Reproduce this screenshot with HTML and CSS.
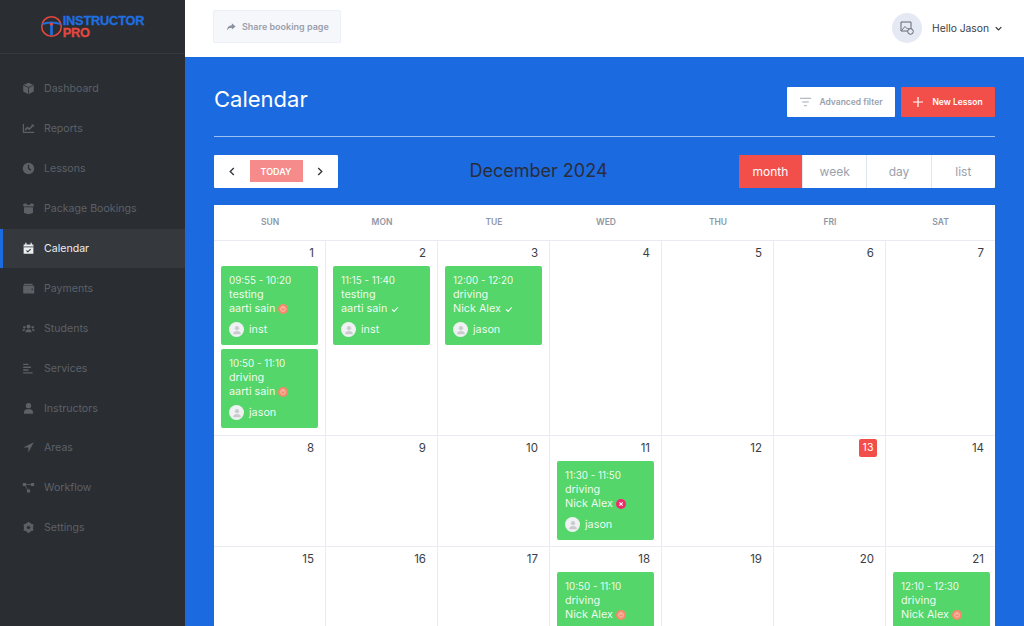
FILE: index.html
```html
<!DOCTYPE html>
<html lang="en">
<head>
<meta charset="utf-8">
<title>Calendar</title>
<link rel="stylesheet" href="styles.css">
</head>
<body>
<svg class="defs" width="0" height="0">
  <symbol id="person" viewBox="0 0 16 16"><circle cx="8" cy="5.6" r="2.8"/><path d="M2.8 13.6c0-3 2.2-4.4 5.2-4.4s5.2 1.400 5.200 4.400z"/></symbol>
  <symbol id="pending" viewBox="0 0 12 12"><circle cx="6" cy="6" r="6" fill="#f58a6c"/><circle cx="6" cy="6" r="2.8" fill="none" stroke="#fbd0c0" stroke-width="1"/><path d="M6 3.2v3" stroke="#fbd0c0" stroke-width="1"/></symbol>
  <symbol id="cancel" viewBox="0 0 12 12"><circle cx="6" cy="6" r="6" fill="#ee2b6c"/><path d="M4 4l4 4M8 4l-4 4" stroke="#fff" stroke-width="1.3"/></symbol>
  <symbol id="check" viewBox="0 0 12 12"><path d="M2.5 6.5l2.4 2.4 4.6-5" fill="none" stroke="#fff" stroke-width="1.3"/></symbol>
</svg>
<div class="app">
  <aside class="sidebar">
    <div class="brand">
      <svg class="brand-mark" viewBox="0 0 24 24" width="23" height="23"><circle cx="12" cy="12" r="10.2" fill="none" stroke="#e5483f" stroke-width="1.6"/><path d="M2.5 9.6c3-1.3 6-1.7 9.5-1.7s6.500.4 9.500 1.700" fill="none" stroke="#1f6fe0" stroke-width="2"/><path d="M10.600 9h2.800v12h-2.800z" fill="#1f6fe0"/><circle cx="12" cy="9.500" r="1.800" fill="#e5483f"/></svg>
      <div class="brand-text"><span class="brand-a">INSTRUCTOR</span><span class="brand-b">PRO</span></div>
    </div>
    <nav class="nav">
      <a class="nav-item"><svg class="nav-icon" viewBox="0 0 16 16"><path d="M8 1l6.500 2.600v8L8 15l-6.500-3.400v-8z"/><path d="M2 4l6 2.800L14 4M8 6.800V15" fill="none" stroke="#2a2d32" stroke-width="1"/></svg>Dashboard</a>
      <a class="nav-item"><svg class="nav-icon" viewBox="0 0 16 16"><path d="M1 2.500h1.500v9.500H15v1.500H1z"/><path d="M3.500 8.500l3-3 2.500 2 3.200-3.500-1.200-1h3.500v3.500l-1.100-1.100L9 10.200 6.700 8.300 3.500 11z"/></svg>Reports</a>
      <a class="nav-item"><svg class="nav-icon" viewBox="0 0 16 16"><circle cx="8" cy="8" r="7"/><path d="M8 3.500V8l3 2" fill="none" stroke="#2a2d32" stroke-width="1.500"/></svg>Lessons</a>
      <a class="nav-item"><svg class="nav-icon" viewBox="0 0 16 16"><path d="M1 3l3-1.500L8 4l4-2.500L15 3l-1 2.500H2zM2.500 6.500h11v7l-5.500 1.500-5.500-1.500z"/></svg>Package Bookings</a>
      <a class="nav-item is-active"><svg class="nav-icon" viewBox="0 0 16 16"><path d="M4 1h1.500v2H4zM10.500 1H12v2h-1.500zM2 3h12v11.500H2z"/><path d="M2 6h12" stroke="#35383d" stroke-width="1"/><path d="M5.500 10.500l1.800 1.600 3.300-3.300" fill="none" stroke="#35383d" stroke-width="1.400"/></svg>Calendar</a>
      <a class="nav-item"><svg class="nav-icon" viewBox="0 0 16 16"><path d="M2.500 2h10.500v2H2zM1.500 4.500h13.500v9.500h-13.500z"/><circle cx="12.500" cy="9" r="1" fill="#2a2d32"/></svg>Payments</a>
      <a class="nav-item"><svg class="nav-icon" viewBox="0 0 16 16"><circle cx="8" cy="5.500" r="2.500"/><circle cx="2.800" cy="6.500" r="1.500"/><circle cx="13.200" cy="6.500" r="1.500"/><path d="M4.200 12.500c0-2.500 1.500-3.700 3.800-3.700s3.800 1.200 3.800 3.700zM.5 11c0-1.500.8-2.500 2.300-2.500l.7.200L3 11zM15.500 11c0-1.500-.8-2.500-2.300-2.500l-.7.200.5 2.300z"/></svg>Students</a>
      <a class="nav-item"><svg class="nav-icon" viewBox="0 0 16 16"><path d="M1.500 2H8v1.800H1.500zM1.500 5.500H11v1.800H1.500zM1.500 9H8v1.800H1.500zM1.500 12.500H13v1.800H1.500z"/></svg>Services</a>
      <a class="nav-item"><svg class="nav-icon" viewBox="0 0 16 16"><circle cx="8" cy="4.500" r="3.300"/><path d="M2.500 14.500v-2c0-2 1.500-3.500 3.500-3.500h4c2 0 3.500 1.500 3.500 3.500v2z"/></svg>Instructors</a>
      <a class="nav-item"><svg class="nav-icon" viewBox="0 0 16 16"><path d="M14.500 1.500L1.500 8h6.300v6.500z"/></svg>Areas</a>
      <a class="nav-item"><svg class="nav-icon" viewBox="0 0 16 16"><path d="M1 2.500h4v3.500H1zM11 2.500h4v3.500h-4zM6 10.500h4V14H6z"/><path d="M4 4.300h8M3.500 5.500L7.500 11" stroke="#5c6168" stroke-width="1"/></svg>Workflow</a>
      <a class="nav-item"><svg class="nav-icon" viewBox="0 0 16 16"><circle cx="8" cy="8" r="4.300" fill="none" stroke="#5c6168" stroke-width="3"/><path d="M8 1.200v13.600M2.100 4.600l11.800 6.800M2.100 11.400l11.800-6.800" stroke="#5c6168" stroke-width="2.200"/><circle cx="8" cy="8" r="1.900" fill="#2a2d32"/></svg>Settings</a>
    </nav>
  </aside>
  <div class="content">
    <header class="topbar">
      <button class="share"><svg viewBox="0 0 12 12" width="10" height="10"><path d="M7 1.500l4.500 3.800L7 9V6.800C4.500 6.800 2.500 7.500 1 10.200 1.200 6.500 3.500 4 7 3.800z"/></svg>Share booking page</button>
      <div class="user">
        <span class="user-avatar"><svg viewBox="0 0 16 16" width="16" height="16"><path d="M2 2h10v9H2z" fill="none" stroke="#62666e" stroke-width="1"/><path d="M2.500 10.500l3.500-4 2.500 2.500 1-1 2 2" fill="none" stroke="#62666e" stroke-width=".9"/><circle cx="11.500" cy="11.500" r="2.800" fill="#e4e9f3" stroke="#62666e" stroke-width="1"/></svg></span>
        <span class="user-name">Hello Jason</span>
        <svg class="chev" viewBox="0 0 10 6" width="7" height="5"><path d="M1 1l4 4 4-4" fill="none" stroke="#33363c" stroke-width="1.800"/></svg>
      </div>
    </header>
    <main class="main">
      <div class="page-head">
        <h1 class="page-title">Calendar</h1>
        <div class="page-actions">
          <button class="btn btn-filter"><svg viewBox="0 0 14 10" width="13" height="10"><path d="M1 1h12M3.500 5h7M5.500 9h3" stroke="#9aa1ad" stroke-width="1" fill="none"/></svg>Advanced filter</button>
          <button class="btn btn-new"><svg viewBox="0 0 10 10" width="10" height="10"><path d="M5 0v10M0 5h10" stroke="#fff" stroke-width="1.200"/></svg>New Lesson</button>
        </div>
      </div>
      <hr class="rule">
      <div class="toolbar">
        <div class="nav-group">
          <svg viewBox="0 0 6 10" width="6" height="9"><path d="M5 1L1 5l4 4" fill="none" stroke="#33363c" stroke-width="1.500"/></svg>
          <span class="today">TODAY</span>
          <svg viewBox="0 0 6 10" width="6" height="9"><path d="M1 1l4 4-4 4" fill="none" stroke="#33363c" stroke-width="1.500"/></svg>
        </div>
        <h2 class="month-title">December 2024</h2>
        <div class="views">
          <span class="view is-on">month</span><span class="view">week</span><span class="view">day</span><span class="view">list</span>
        </div>
      </div>
      <div class="cal">
        <div class="dow">SUN</div><div class="dow">MON</div><div class="dow">TUE</div><div class="dow">WED</div><div class="dow">THU</div><div class="dow">FRI</div><div class="dow">SAT</div>

        <div class="day"><span class="num">1</span>
          <div class="ev"><div class="ev-time">09:55 - 10:20</div><div>testing</div><div class="ev-name">aarti sain <svg class="st" width="10" height="10"><use href="#pending"/></svg></div><div class="ev-who"><span class="ava"><svg width="12" height="12"><use href="#person"/></svg></span>inst</div></div>
          <div class="ev"><div class="ev-time">10:50 - 11:10</div><div>driving</div><div class="ev-name">aarti sain <svg class="st" width="10" height="10"><use href="#pending"/></svg></div><div class="ev-who"><span class="ava"><svg width="12" height="12"><use href="#person"/></svg></span>jason</div></div>
        </div>
        <div class="day"><span class="num">2</span>
          <div class="ev"><div class="ev-time">11:15 - 11:40</div><div>testing</div><div class="ev-name">aarti sain <svg class="st" width="10" height="10"><use href="#check"/></svg></div><div class="ev-who"><span class="ava"><svg width="12" height="12"><use href="#person"/></svg></span>inst</div></div>
        </div>
        <div class="day"><span class="num">3</span>
          <div class="ev"><div class="ev-time">12:00 - 12:20</div><div>driving</div><div class="ev-name">Nick Alex <svg class="st" width="10" height="10"><use href="#check"/></svg></div><div class="ev-who"><span class="ava"><svg width="12" height="12"><use href="#person"/></svg></span>jason</div></div>
        </div>
        <div class="day"><span class="num">4</span></div>
        <div class="day"><span class="num">5</span></div>
        <div class="day"><span class="num">6</span></div>
        <div class="day"><span class="num">7</span></div>

        <div class="day"><span class="num">8</span></div>
        <div class="day"><span class="num">9</span></div>
        <div class="day"><span class="num">10</span></div>
        <div class="day"><span class="num">11</span>
          <div class="ev"><div class="ev-time">11:30 - 11:50</div><div>driving</div><div class="ev-name">Nick Alex <svg class="st" width="10" height="10"><use href="#cancel"/></svg></div><div class="ev-who"><span class="ava"><svg width="12" height="12"><use href="#person"/></svg></span>jason</div></div>
        </div>
        <div class="day"><span class="num">12</span></div>
        <div class="day"><span class="num is-today">13</span></div>
        <div class="day"><span class="num">14</span></div>

        <div class="day"><span class="num">15</span></div>
        <div class="day"><span class="num">16</span></div>
        <div class="day"><span class="num">17</span></div>
        <div class="day"><span class="num">18</span>
          <div class="ev ev-cut"><div class="ev-time">10:50 - 11:10</div><div>driving</div><div class="ev-name">Nick Alex <svg class="st" width="10" height="10"><use href="#pending"/></svg></div></div>
        </div>
        <div class="day"><span class="num">19</span></div>
        <div class="day"><span class="num">20</span></div>
        <div class="day"><span class="num">21</span>
          <div class="ev ev-cut"><div class="ev-time">12:10 - 12:30</div><div>driving</div><div class="ev-name">Nick Alex <svg class="st" width="10" height="10"><use href="#pending"/></svg></div></div>
        </div>
      </div>
    </main>
  </div>
</div>
</body>
</html>
```
FILE: styles.css
```css
* { box-sizing: border-box; }
html, body { margin: 0; height: 100%; overflow: hidden; }
body { font-family: Inter, "Open Sans", "Liberation Sans", sans-serif; color: #33363c; background: #1b6ae0; }
.defs { display: block; height: 0; }
.app { display: flex; height: 626px; }

.sidebar { width: 185px; flex: none; background: #2a2d32; }
.brand { height: 54px; border-bottom: 1px solid #35383d; display: flex; align-items: center; justify-content: center; gap: 0; padding-right: 1px; }
.brand-text { display: flex; flex-direction: column; gap: 1px; font-family: "Liberation Sans", sans-serif; font-weight: 700; font-size: 12.800px; line-height: 11px; letter-spacing: -.2px; }
.brand-a { color: #1f6fe0; -webkit-text-stroke: .3px #1f6fe0; }
.brand-b { color: #e5483f; -webkit-text-stroke: .3px #e5483f; }
.nav { padding-top: 15px; }
.nav-item { height: 39.9px; display: flex; align-items: center; gap: 9px; padding-left: 22px; font-size: 10.6px; color: #5c6168; }
.nav-icon { width: 13px; height: 13px; fill: #5c6168; flex: none; }
.nav-item.is-active { background: #35383d; color: #eceef0; box-shadow: inset 3px 0 0 #1b6ae0; }
.nav-item.is-active .nav-icon { fill: #eceef0; }

.content { flex: 1; min-width: 0; display: flex; flex-direction: column; }
.topbar { height: 57px; flex: none; background: #fff; display: flex; align-items: center; justify-content: space-between; padding: 0 22px 3px 28px; }
.share { width: 128px; height: 33px; margin-bottom: 1px; display: flex; align-items: center; gap: 6px; padding: 0 12px; background: #f5f7fb; border: 1px solid #eceff6; border-radius: 2px; font: 600 9px Inter, sans-serif; color: #9aa0ac; white-space: nowrap; }
.share svg { fill: #8a909c; flex: none; }
.user { display: flex; align-items: center; margin-top: 2px; }
.user-avatar { width: 30px; height: 30px; border-radius: 50%; background: #e4e9f3; display: flex; align-items: center; justify-content: center; margin-right: 10px; }
.user-name { font-size: 10.3px; color: #3a3d44; margin-right: 6px; width: 57px; white-space: nowrap; }
.chev { display: block; }

.main { flex: 1; background: #1b6ae0; padding: 30px 29px 0 29px; overflow: hidden; }
.page-head { display: flex; align-items: center; justify-content: space-between; height: 29px; }
.page-title { margin: 0; font-size: 22px; line-height: 25px; align-self: flex-start; font-weight: 400; color: #fff; }
.page-actions { display: flex; gap: 6px; }
.btn { height: 30px; display: flex; align-items: center; justify-content: center; border: 0; border-radius: 1px; font: 600 8.500px Inter, sans-serif; }
.btn-filter { width: 108px; background: #fff; color: #9aa1ad; gap: 7px; }
.btn-new { width: 94px; background: #f24e4a; color: #fff; gap: 9px; }
.rule { margin: 20px 0 18px; border: 0; height: 1px; background: #9dc0f2; }

.toolbar { display: flex; align-items: center; justify-content: space-between; height: 33px; margin-bottom: 17px; }
.nav-group { width: 124px; height: 33px; background: #fff; display: flex; align-items: center; gap: 14.500px; padding: 0 15px 1px; border-radius: 1px; }
.today { width: 53px; height: 22px; background: #f58b8b; color: #fff; font-size: 9px; font-weight: 600; display: flex; align-items: center; justify-content: center; }
.month-title { margin: 0 0 2px; font-size: 18px; font-weight: 400; color: #2a2d3a; }
.views { display: flex; width: 256px; height: 33px; background: #fff; border-radius: 1px; }
.view { flex: 1; display: flex; align-items: center; justify-content: center; padding-bottom: 1px; font-size: 12px; color: #9aa1ad; border-left: 1px solid #dfe6f2; }
.view.is-on { width: 63px; flex: none; background: #f24e4a; color: #fff; border-left: 0; }

.cal { display: grid; grid-template-columns: repeat(6, 112px) 1fr; grid-template-rows: 36px 195px 111px auto; background: #fff; }
.dow { display: flex; align-items: center; justify-content: center; padding-bottom: 1px; font-size: 8.500px; font-weight: 600; color: #8f97a5; border-bottom: 1px solid #e8ebf3; }
.day { border-right: 1px solid #e8ebf3; border-bottom: 1px solid #e8ebf3; padding: 0 5px 6px 7px; display: flex; flex-direction: column; gap: 4px; }
.day:nth-child(7n) { border-right: 0; }
.num { align-self: flex-end; padding: 5px 6px 2px 0; font-size: 11.500px; line-height: 14px; color: #3a3d44; }
.num.is-today { background: #f24e4a; color: #fff; width: 18px; height: 18px; line-height: 18px; padding: 0; margin: 3px 3px 0 0; text-align: center; border-radius: 2px; font-size: 10.500px; }
.ev { height: 79px; width: 97px; background: #54d66a; border-radius: 2px; color: rgba(255,255,255,.92); font-size: 10.800px; line-height: 14px; padding: 8px 8px 7px; }
.ev-time { font-size: 9.800px; }
.ev-name { display: flex; align-items: center; gap: 3px; }
.st { flex: none; }
.ev-who { display: flex; align-items: center; gap: 5px; margin-top: 6px; height: 15px; }
.ava { width: 15px; height: 15px; border-radius: 50%; background: #f0f1f2; display: flex; align-items: center; justify-content: center; }
.ava svg { fill: #c9cbce; }
```
